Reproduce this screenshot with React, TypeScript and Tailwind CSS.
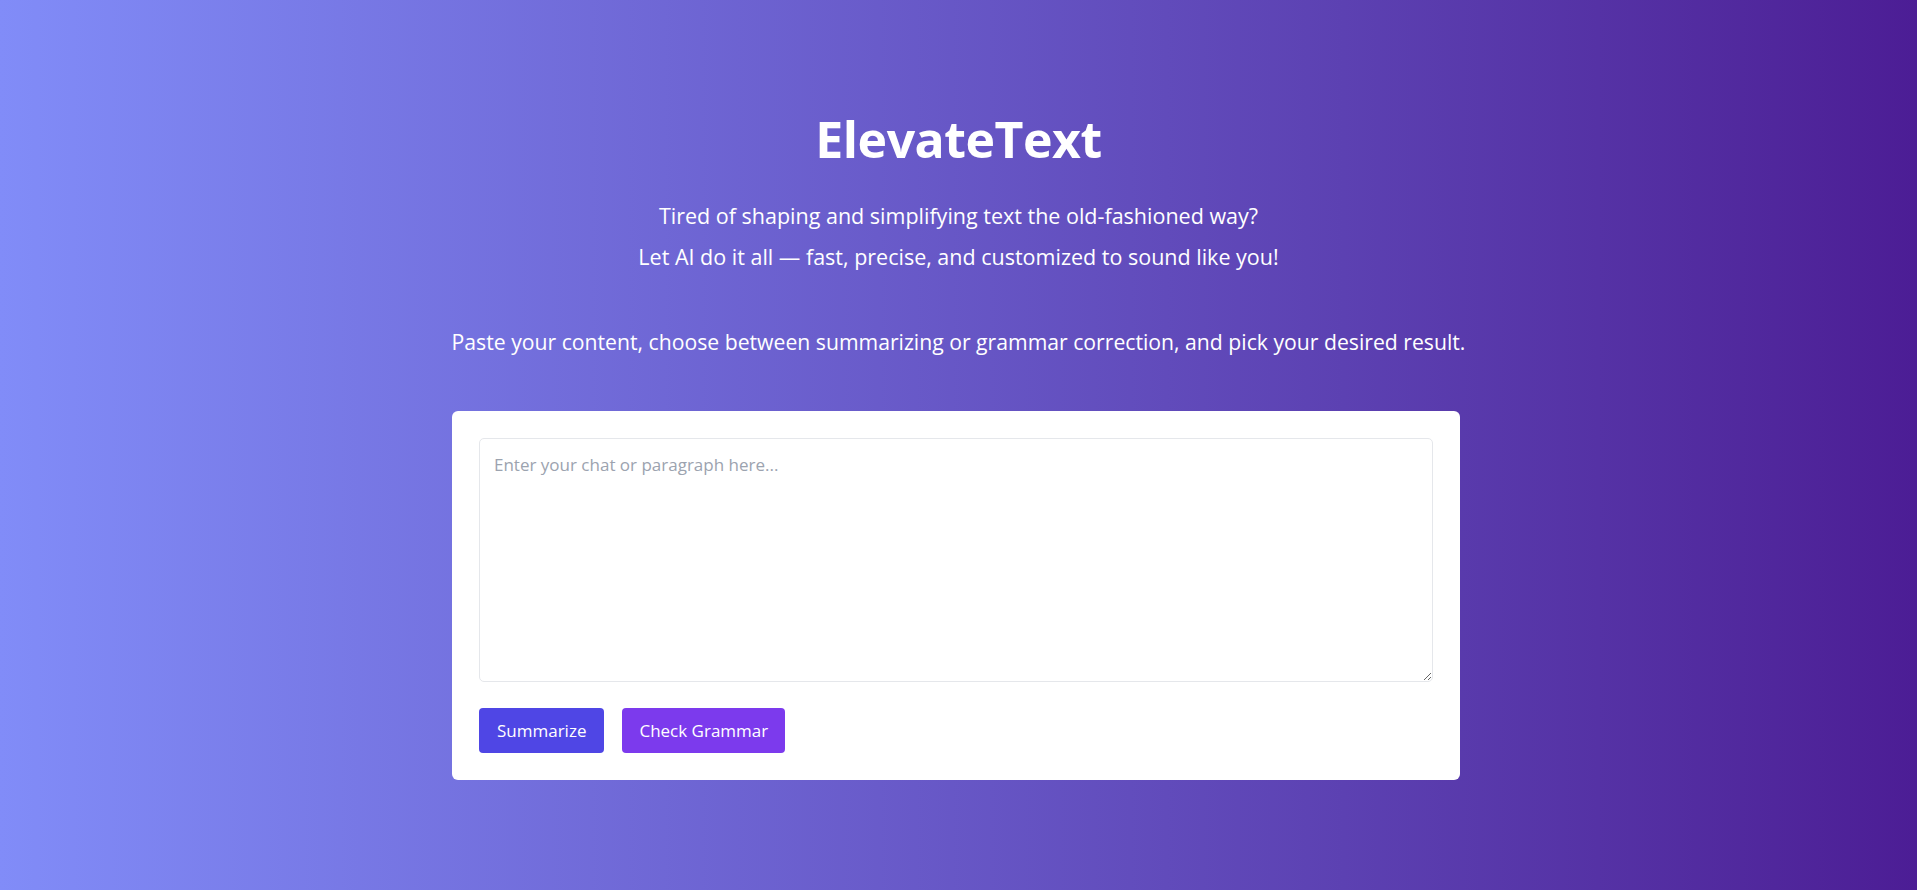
export default function App() {
  return (
    <div
      className="min-h-screen w-full flex flex-col items-center bg-gradient-to-r from-[#818cf8] to-[#4c1d95] text-white pt-[111px] pb-[111px]"
      style={{ fontFamily: '"Open Sans", "Noto Sans", sans-serif' }}
    >
      {/* Header */}
      <h1 className="text-[50px] font-bold leading-[56px] tracking-[-0.5px]">ElevateText</h1>
      <div className="mt-[28px] flex flex-col items-center text-[21.5px] leading-[41px]">
        <p>Tired of shaping and simplifying text the old-fashioned way?</p>
        <p>Let AI do it all — fast, precise, and customized to sound like you!</p>
      </div>
      <p className="mt-[45px] text-[21.2px] leading-[40px]">
        Paste your content, choose between summarizing or grammar correction, and pick your desired result.
      </p>

      {/* Input card */}
      <div className="mt-[49px] mr-[5px] w-[1008px] bg-white rounded-md p-[27px]">
        <textarea
          className="block w-full h-[244px] border border-[#e5e7eb] rounded-[5px] px-[14px] py-[13px] text-[17px] text-gray-800 placeholder:text-[#9ca3af] outline-none resize-y"
          placeholder="Enter your chat or paragraph here..."
        />
        <div className="mt-[26px] flex gap-[18px]">
          <button className="h-[45px] px-[18px] rounded-[4px] bg-[#4f46e5] text-white text-[17px]">
            Summarize
          </button>
          <button className="h-[45px] px-[17px] rounded-[4px] bg-[#7c3aed] text-white text-[17px]">
            Check Grammar
          </button>
        </div>
      </div>
    </div>
  );
}
